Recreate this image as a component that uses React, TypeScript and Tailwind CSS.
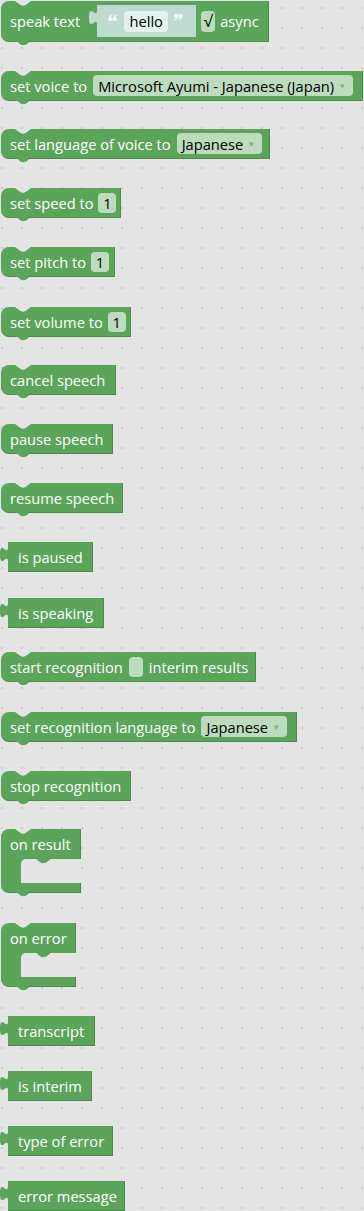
import React from "react";

const blk =
  "relative flex shrink-0 items-center bg-[#5ba55b] text-white border-b border-r border-[#4a8a4a]";

// gray cutout on the top edge of stack blocks
function Notch() {
  return (
    <svg className="absolute left-[14px] top-0" width="16" height="5" viewBox="0 0 16 5">
      <path d="M0 0 L5.5 4 Q8 5.3 10.5 4 L16 0 Z" fill="#e4e4e4" />
    </svg>
  );
}

// green tab below stack blocks
function NextTab({ className = "absolute left-[14px] bottom-[-5px]" }: { className?: string }) {
  return (
    <svg className={className} width="16" height="6" viewBox="0 0 16 6">
      <path d="M0 0 L5.5 4.5 Q8 6 10.5 4.5 L16 0 Z" fill="#5ba55b" />
      <path d="M10.5 4.5 L16 0" stroke="#4a8a4a" strokeWidth="1" fill="none" />
    </svg>
  );
}

// puzzle tab on the left of value blocks
function OutTab({ fill }: { fill: string }) {
  return (
    <svg className="absolute left-[-8px] top-[5px]" width="9" height="16" viewBox="-8 5 9 16">
      <path d="M1 5 L0 5 C0 15 -8 -3 -8 12.5 S0 10 0 20 L1 20 Z" fill={fill} />
    </svg>
  );
}

// quote marks of the text block
const mark = "M4 0.3 Q1.2 1.4 0.5 4.2 A2.1 2.1 0 1 0 2.6 3.1 Q2.9 2 4.4 1.2 Z";

function Quote({ close, className }: { close?: boolean; className: string }) {
  return (
    <svg className={className} width="9" height="7" viewBox="0 0 9 7">
      <g transform={close ? "rotate(180 4.5 3.5)" : undefined} fill="#f4f9f7">
        <path d={mark} />
        <path d={mark} transform="translate(4.4 0)" />
      </g>
    </svg>
  );
}

function Stack({ className, children }: { className: string; children: React.ReactNode }) {
  return (
    <div className={`${blk} rounded-l-[8px] pl-[9px] ${className}`}>
      <Notch />
      {children}
      <NextTab />
    </div>
  );
}

function Value({ className, children }: { className: string; children: React.ReactNode }) {
  return (
    <div className={`${blk} h-[30px] pl-[10px] ${className}`}>
      <OutTab fill="#5ba55b" />
      {children}
    </div>
  );
}

function Dropdown({ children }: { children: React.ReactNode }) {
  return (
    <div className="ml-[6px] flex h-[21px] items-center rounded-[4px] bg-[#bddbbd] pl-[5px] pr-[8px] text-black">
      <span>{children}</span>
      <span className="ml-[6px] text-[9px] text-[#7cb47c]">▾</span>
    </div>
  );
}

function Num() {
  return (
    <div className="ml-[5px] flex h-[20px] w-[18px] items-center justify-center rounded-[4px] bg-[#bddbbd] text-black">
      1
    </div>
  );
}

function CBlock({ className, label }: { className: string; label: string }) {
  return (
    <div className={`relative flex shrink-0 flex-col text-white ${className}`}>
      <div className="relative flex h-[30px] items-center rounded-tl-[8px] border-r border-[#4a8a4a] bg-[#5ba55b] pl-[9px]">
        <Notch />
        {label}
      </div>
      <div className="flex h-[24px] bg-[#5ba55b]">
        <div className="w-[20px]" />
        <div className="relative flex-1 rounded-tl-[5px] bg-[#e4e4e4]">
          <NextTab className="absolute left-[14px] top-[-1px]" />
        </div>
      </div>
      <div className="relative h-[10px] rounded-bl-[8px] border-b border-r border-[#4a8a4a] bg-[#5ba55b]">
        <NextTab />
      </div>
    </div>
  );
}

export default function App() {
  return (
    <div className="h-[1211px] w-[364px] overflow-hidden bg-[#e4e4e4] bg-[radial-gradient(circle,#cbcbcb_0.8px,transparent_1.1px)] bg-[length:20px_20px] bg-[position:-8px_-2px] font-['Open_Sans',sans-serif] text-[14.67px]">
      <div className="flex flex-col items-start pl-[1px] pt-[1px]">
        <Stack className="h-[41px] w-[268px]">
          <span>speak text</span>
          <div className="relative ml-[17px] flex h-[32px] w-[99px] items-center bg-[#bddbd1] pl-[11px]">
            <OutTab fill="#bddbd1" />
            <Quote className="mb-[7px] shrink-0" />
            <div className="ml-[7px] flex h-[21px] w-[44px] items-center justify-center rounded-[4px] bg-[#e5f1ed] text-black">
              hello
            </div>
            <Quote close className="mb-[7px] ml-[6px] shrink-0" />
          </div>
          <div className="ml-[5px] flex h-[21px] w-[14px] items-center justify-center rounded-[4px] bg-[#bddbbd] text-[16px] text-black">
            √
          </div>
          <span className="ml-[5px]">async</span>
        </Stack>

        <Stack className="mt-[29px] h-[30px] w-[362px]">
          <span>set voice to</span>
          <Dropdown>Microsoft Ayumi - Japanese (Japan)</Dropdown>
        </Stack>

        <Stack className="mt-[28px] h-[30px] w-[269px]">
          <span>set language of voice to</span>
          <Dropdown>Japanese</Dropdown>
        </Stack>

        <Stack className="mt-[29px] h-[30px] w-[120px]">
          <span>set speed to</span>
          <Num />
        </Stack>

        <Stack className="mt-[29px] h-[30px] w-[114px]">
          <span>set pitch to</span>
          <Num />
        </Stack>

        <Stack className="mt-[30px] h-[30px] w-[130px]">
          <span>set volume to</span>
          <Num />
        </Stack>

        <Stack className="mt-[28px] h-[30px] w-[115px]">
          <span>cancel speech</span>
        </Stack>

        <Stack className="mt-[29px] h-[30px] w-[112px]">
          <span>pause speech</span>
        </Stack>

        <Stack className="mt-[29px] h-[30px] w-[122px]">
          <span>resume speech</span>
        </Stack>

        <Value className="ml-[7px] mt-[29px] w-[85px]">
          <span>is paused</span>
        </Value>

        <Value className="ml-[7px] mt-[26px] w-[96px]">
          <span>is speaking</span>
        </Value>

        <Stack className="mt-[24px] h-[30px] w-[255px]">
          <span>start recognition</span>
          <div className="ml-[6px] h-[20px] w-[14px] rounded-[4px] bg-[#bddbbd]" />
          <span className="ml-[6px]">interim results</span>
        </Stack>

        <Stack className="mt-[30px] h-[30px] w-[296px]">
          <span>set recognition language to</span>
          <Dropdown>Japanese</Dropdown>
        </Stack>

        <Stack className="mt-[29px] h-[30px] w-[130px]">
          <span>stop recognition</span>
        </Stack>

        <CBlock className="mt-[28px] w-[80px]" label="on result" />

        <CBlock className="mt-[30px] w-[75px]" label="on error" />

        <Value className="ml-[7px] mt-[29px] w-[87px]">
          <span>transcript</span>
        </Value>

        <Value className="ml-[7px] mt-[25px] w-[84px]">
          <span>is interim</span>
        </Value>

        <Value className="ml-[7px] mt-[25px] w-[105px]">
          <span>type of error</span>
        </Value>

        <Value className="ml-[7px] mt-[25px] w-[117px]">
          <span>error message</span>
        </Value>
      </div>
    </div>
  );
}
